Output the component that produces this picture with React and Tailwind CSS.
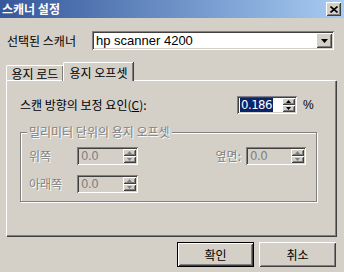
const raised =
  'shadow-[inset_1px_1px_0_#ffffff,inset_-1px_-1px_0_#404040,inset_2px_2px_0_#d4d0c8,inset_-2px_-2px_0_#808080]';
const sunken =
  'shadow-[inset_1px_1px_0_#808080,inset_-1px_-1px_0_#ffffff,inset_2px_2px_0_#404040,inset_-2px_-2px_0_#d4d0c8]';

const font = { fontFamily: '"Noto Sans CJK KR", "Liberation Sans", sans-serif' };

const Arrow = ({ up, color = '#000' }) => (
  <svg width="5" height="3" viewBox="0 0 5 3">
    {up ? <path d="M2.5 0 L5 3 L0 3 Z" fill={color} /> : <path d="M0 0 L5 0 L2.5 3 Z" fill={color} />}
  </svg>
);

const Spin = ({ value, selected, disabled, width = 'w-[60px]' }) => (
  <div className={`${width} h-[18px] flex ${sunken} p-[2px] ${disabled ? 'bg-[#d4d0c8]' : 'bg-white'}`}>
    <div className="flex-1 flex items-center pl-[1px]">
      <span
        className={`text-[13px] leading-[14px] tracking-[-0.5px] px-[1px] ${
          selected ? 'bg-[#0a246a] text-white' : disabled ? 'text-[#808080]' : 'text-black'
        }`}
        style={{ fontFamily: '"Liberation Sans Narrow", "DejaVu Sans Condensed", sans-serif' }}
      >
        {value}
      </span>
    </div>
    <div className="w-[13px] flex flex-col">
      <div className={`flex-1 flex items-center justify-center bg-[#d4d0c8] ${raised}`}>
        <Arrow up color={disabled ? '#808080' : '#000'} />
      </div>
      <div className={`flex-1 flex items-center justify-center bg-[#d4d0c8] ${raised}`}>
        <Arrow color={disabled ? '#808080' : '#000'} />
      </div>
    </div>
  </div>
);

const Disabled = ({ children, className = '' }) => (
  <span className={`text-[#808080] [text-shadow:1px_1px_0_#ffffff] ${className}`}>{children}</span>
);

export default function App() {
  return (
    <div className="w-[344px] h-[272px] bg-[#d4d0c8] overflow-hidden text-[12px] text-black" style={font}>
      {/* title bar */}
      <div className="h-[18px] flex items-center justify-between pl-[2px] pr-[3px] bg-gradient-to-r from-[#36579a] to-[#a8ccf2]">
        <span className="text-white text-[12px] font-bold leading-none">스캐너 설정</span>
        <div className={`w-[15px] h-[14px] bg-[#d4d0c8] flex items-center justify-center ${raised}`}>
          <svg width="8" height="7" viewBox="0 0 8 7">
            <path d="M0.5 0.5 L7.5 6.5 M7.5 0.5 L0.5 6.5" stroke="#000" strokeWidth="1.6" />
          </svg>
        </div>
      </div>

      {/* scanner select */}
      <div className="flex items-center mt-[13px] pl-[7px]">
        <span className="w-[85px]">선택된 스캐너</span>
        <div className={`w-[242px] h-[19px] bg-white flex items-center ${sunken} p-[2px]`}>
          <span className="flex-1 pl-[2px] text-[13px] leading-none" style={{ fontFamily: '"Liberation Sans", sans-serif' }}>
            hp scanner 4200
          </span>
          <div className={`w-[16px] h-full bg-[#d4d0c8] flex items-center justify-center ${raised}`}>
            <svg width="7" height="4" viewBox="0 0 7 4">
              <path d="M0 0 L7 0 L3.5 4 Z" fill="#000" />
            </svg>
          </div>
        </div>
      </div>

      {/* tabs */}
      <div className="flex items-end mt-[12px] pl-[6px] h-[18px]">
        <div className="h-[16px] w-[57px] flex items-center justify-center border-t border-l border-white rounded-tl-[2px] shadow-[inset_-1px_0_0_#808080] -mb-[1px]">
          용지 로드
        </div>
        <div className="relative z-10 h-[19px] w-[70px] -mb-[1px] flex items-start justify-center pt-[1px] bg-[#d4d0c8] border-t border-l border-white rounded-tl-[2px] shadow-[inset_-1px_0_0_#808080,1px_0_0_#404040]">
          용지 오프셋
        </div>
      </div>

      {/* tab panel */}
      <div className="ml-[6px] w-[330px] h-[156px] border-t border-l border-white shadow-[inset_-1px_-1px_0_#808080,1px_1px_0_#404040] pt-[15px] pl-[13px]">
        <div className="flex items-center">
          <span className="w-[217px]">
            스캔 방향의 보정 요인(<span className="underline">C</span>):
          </span>
          <Spin value="0.186" selected />
          <span className="ml-[6px]" style={{ fontFamily: '"Liberation Sans", sans-serif' }}>%</span>
        </div>

        {/* group box */}
        <div className="relative mt-[18px] w-[297px] h-[70px] border border-[#808080] shadow-[inset_1px_1px_0_#ffffff,1px_1px_0_#ffffff] pt-[14px] pl-[8px]">
          <div className="absolute -top-[9px] left-[6px] px-[2px] bg-[#d4d0c8] leading-[16px]">
            <Disabled>밀리미터 단위의 용지 오프셋</Disabled>
          </div>
          <div className="flex items-center">
            <Disabled className="w-[48px]">위쪽</Disabled>
            <Spin value="0.0" disabled width="w-[61px]" />
            <Disabled className="w-[108px] text-right pr-[5px]">옆면:</Disabled>
            <Spin value="0.0" disabled />
          </div>
          <div className="flex items-center mt-[10px]">
            <Disabled className="w-[48px]">아래쪽</Disabled>
            <Spin value="0.0" disabled width="w-[61px]" />
          </div>
        </div>
      </div>

      {/* buttons */}
      <div className="flex justify-end gap-[5px] mt-[6px] pr-[8px]">
        <div className="w-[77px] h-[25px] border border-black flex">
          <div className={`flex-1 flex items-center justify-center ${raised}`}>확인</div>
        </div>
        <div className={`w-[77px] h-[25px] flex items-center justify-center ${raised}`}>취소</div>
      </div>
    </div>
  );
}
